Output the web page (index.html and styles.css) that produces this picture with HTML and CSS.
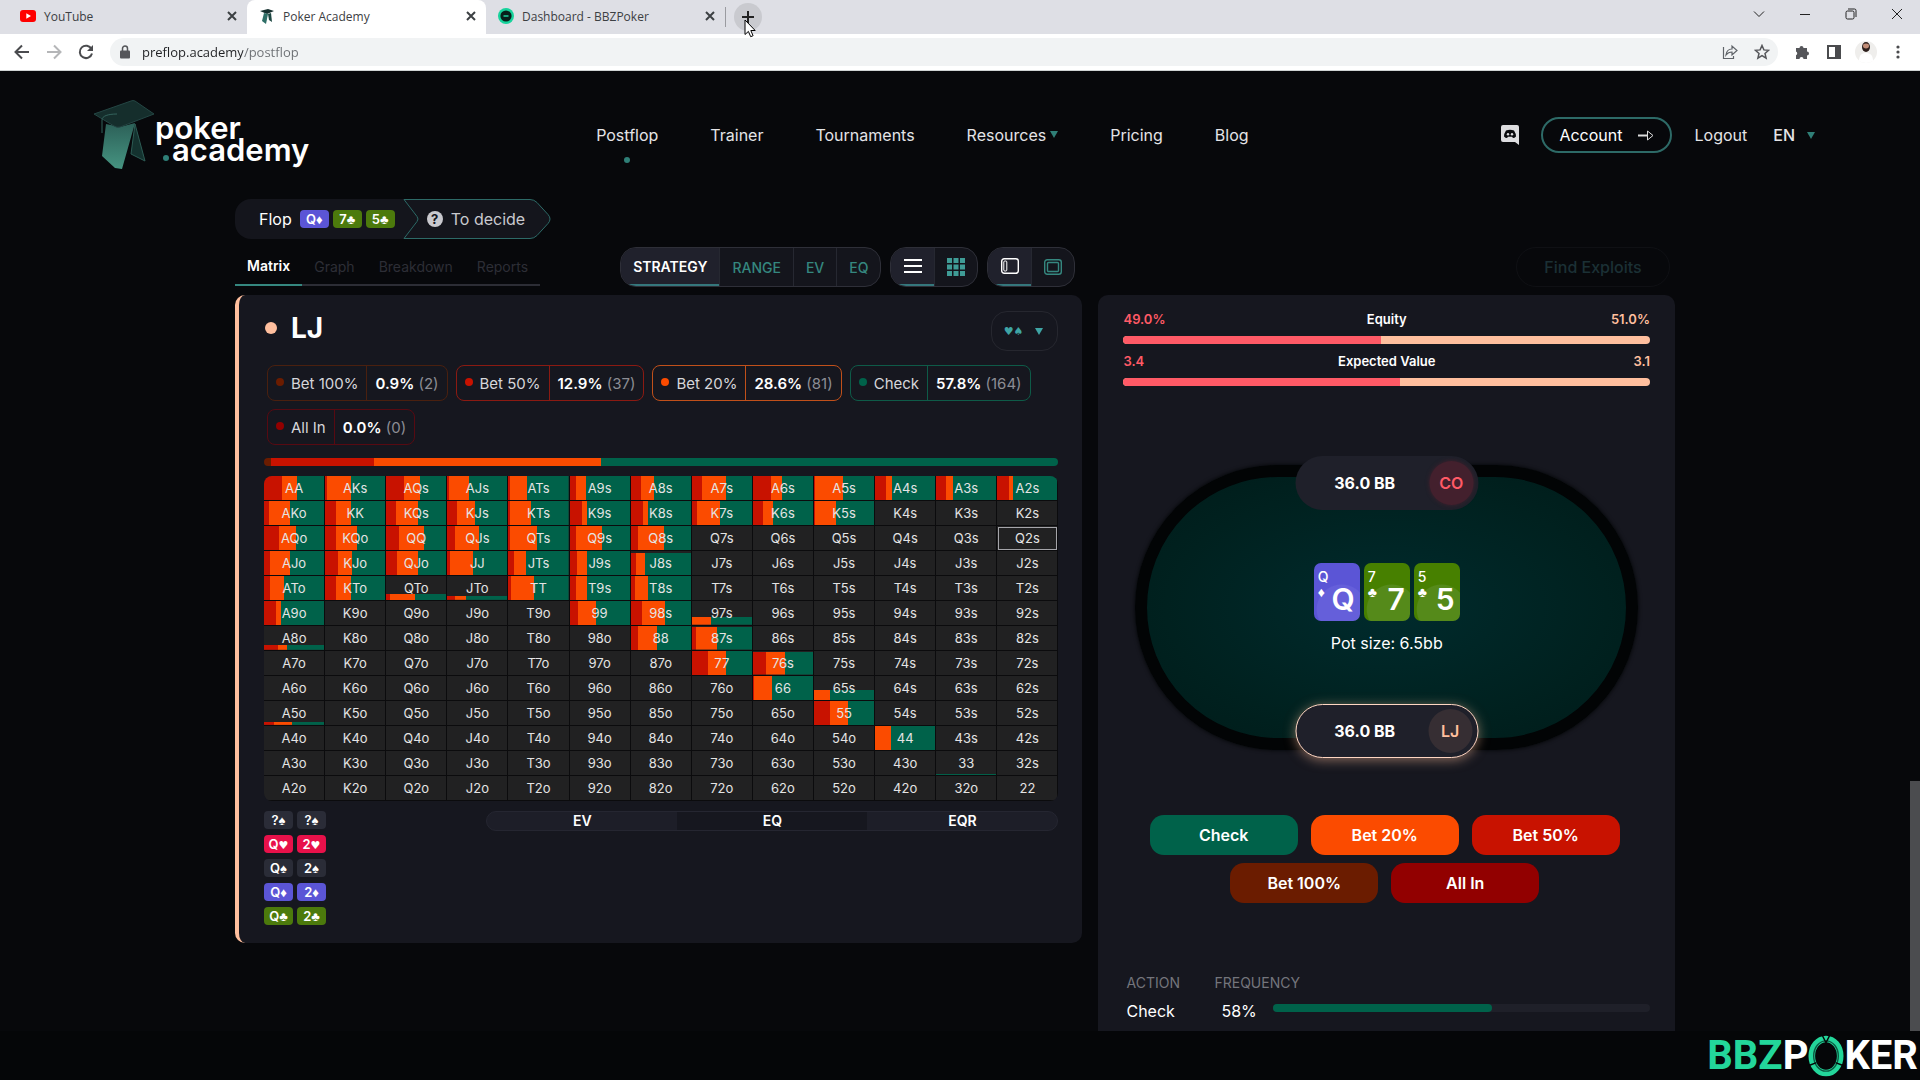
FILE: index.html
```html
<!DOCTYPE html>
<html lang="en">
<head>
    <meta charset="UTF-8">
    <meta name="viewport" content="width=device-width, initial-scale=1.0">
    <title>Poker Academy</title>
    <link rel="stylesheet" href="styles.css">
</head>
<body>
    <div class="browser">
        <div class="tab-strip">
            <div class="tab">
                <svg class="favicon" viewBox="0 0 16 16"><rect y="2" width="16" height="12" rx="3" fill="#f00"/><path d="M6.3 5.2v5.6L11 8z" fill="#fff"/></svg>
                <span class="tab-title">YouTube</span>
                <button class="tab-close" aria-label="Close"><svg viewBox="0 0 10 10"><path d="M1 1l8 8M9 1l-8 8"/></svg></button>
            </div>
            <div class="tab tab-active">
                <svg class="favicon" viewBox="0 0 16 16"><path d="M1 3l8-2 6 2-7 3z" fill="#16302f"/><path d="M5 5l4 1-2 10-4-3z" fill="#2f6f67"/><path d="M9 6l3-1 1 9-3-2z" fill="#1d4742"/></svg>
                <span class="tab-title">Poker Academy</span>
                <button class="tab-close" aria-label="Close"><svg viewBox="0 0 10 10"><path d="M1 1l8 8M9 1l-8 8"/></svg></button>
            </div>
            <div class="tab">
                <svg class="favicon" viewBox="0 0 16 16"><circle cx="8" cy="8" r="8" fill="#17d39c"/><circle cx="8" cy="8" r="5.6" fill="#07201b"/><path d="M5.5 8h5" stroke="#17a37c" stroke-width="2"/></svg>
                <span class="tab-title">Dashboard - BBZPoker</span>
                <button class="tab-close" aria-label="Close"><svg viewBox="0 0 10 10"><path d="M1 1l8 8M9 1l-8 8"/></svg></button>
            </div>
            <div class="new-tab-wrap">
                <button class="new-tab" aria-label="New tab"><svg viewBox="0 0 12 12"><path d="M6 0v12M0 6h12"/></svg></button>
                <svg class="cursor" viewBox="0 0 12 19"><path d="M1 1v14.5l3.4-3.1 2.3 5.3 2.4-1-2.3-5.2h4.4z" fill="#fff" stroke="#000"/></svg>
            </div>
            <div class="window-buttons">
                <button aria-label="Search tabs"><svg viewBox="0 0 12 12"><path d="M1 3.5l5 5 5-5"/></svg></button>
                <button aria-label="Minimize"><svg viewBox="0 0 12 12"><path d="M1 6.5h10"/></svg></button>
                <button aria-label="Restore"><svg viewBox="0 0 12 12"><rect x="1" y="3" width="8" height="8" rx="1.5"/><path d="M3 1h6.500a1.500 1.500 0 0 1 1.500 1.500V9"/></svg></button>
                <button aria-label="Close window"><svg viewBox="0 0 12 12"><path d="M1 1l10 10M11 1L1 11"/></svg></button>
            </div>
        </div>
        <div class="toolbar">
            <button class="tool" aria-label="Back"><svg viewBox="0 0 16 16"><path d="M15 8H2M8 1.500L1.500 8 8 14.500" fill="none" stroke="#4a4b4e" stroke-width="2"/></svg></button>
            <button class="tool" aria-label="Forward"><svg viewBox="0 0 16 16"><path d="M1 8h13M8 1.500L14.500 8 8 14.500" fill="none" stroke="#b5b6b8" stroke-width="2"/></svg></button>
            <button class="tool" aria-label="Reload"><svg viewBox="0 0 16 16"><path d="M13.500 5A6.200 6.200 0 1 0 14 9.500" fill="none" stroke="#4a4b4e" stroke-width="2"/><path d="M15 1v6H9z" fill="#4a4b4e"/></svg></button>
            <div class="omnibox">
                <svg class="lock" viewBox="0 0 10 14"><path d="M2.500 6V3.500a2.500 2.500 0 0 1 5 0V6" fill="none" stroke="#55565a" stroke-width="1.500"/><rect y="5.500" width="10" height="8" rx="1" fill="#55565a"/></svg>
                <input class="url" type="text" value="preflop.academy/postflop" aria-label="Address">
                <button class="tool" aria-label="Share"><svg viewBox="0 0 16 16"><path d="M1.500 3v11.500h10V12M4 11c.5-4 2.500-6 6-6V2l5 4.500-5 4.500V8C7.500 8 5.500 9 4 11z" fill="none" stroke="#5f6368" stroke-width="1.200"/></svg></button>
                <button class="tool" aria-label="Bookmark"><svg viewBox="0 0 16 16"><path d="M8 1.500l1.900 4.400 4.700.4-3.600 3.100 1.100 4.700L8 11.600l-4.100 2.500L5 9.400 1.400 6.300l4.700-.4z" fill="none" stroke="#55565a" stroke-width="1.500"/></svg></button>
            </div>
            <button class="tool" aria-label="Extensions"><svg viewBox="0 0 16 16"><path d="M2 4h3.500a2 2 0 1 1 4 0H13v3.500a2 2 0 1 1 0 4V15H9.500a2 2 0 0 0-4 0H2v-3.800a2 2 0 0 0 0-3.700z" fill="#55565a"/></svg></button>
            <button class="tool" aria-label="Side panel"><svg viewBox="0 0 16 16"><path d="M1 1h14v14H1zM3 3v10h6V3z" fill="#4a4b4e" fill-rule="evenodd"/></svg></button>
            <button class="tool" aria-label="Profile"><svg class="avatar" viewBox="0 0 22 22"><circle cx="11" cy="11" r="11" fill="#efeeec"/><path d="M4 20c0-6 3-8 7-8s7 2 7 8c-4 2.500-10 2.500-14 0z" fill="#fff"/><ellipse cx="11" cy="6" rx="4" ry="5" fill="#2c1e1b"/><ellipse cx="11" cy="5" rx="3" ry="2.400" fill="#c18c76"/></svg></button>
            <button class="tool" aria-label="Menu"><svg viewBox="0 0 16 16"><circle cx="8" cy="3" r="1.600"/><circle cx="8" cy="8" r="1.600"/><circle cx="8" cy="13" r="1.600"/></svg></button>
        </div>
    </div>

    <div class="viewport">
        <div class="page">
            <header class="header">
                <a class="logo" href="#">
                    <svg class="logo-hat" viewBox="0 0 62 70">
                        <defs><linearGradient id="gown" x1="0" y1="0" x2="0" y2="1"><stop offset="0" stop-color="#2c6058"/><stop offset="1" stop-color="#469481"/></linearGradient></defs>
                        <path d="M42 24l10 37-14-7z" fill="#14322f" stroke="#2c5b54"/>
                        <path d="M13 24l14 3 15-4-13 46-7-1-13-12z" fill="url(#gown)"/>
                        <path d="M1 14L38 1q2-1 4 0l19 13-34 13q-3 1-6-1z" fill="#152e2c" stroke="#244644"/>
                        <path d="M24 14c-9 0-15 2-15 6v13" fill="none" stroke="#33635c"/>
                    </svg>
                    <span class="logo-text"><span>poker</span><span class="logo-second"><i></i>academy</span></span>
                </a>
                <nav class="nav">
                    <a class="nav-current" href="#">Postflop</a>
                    <a href="#">Trainer</a>
                    <a href="#">Tournaments</a>
                    <a href="#">Resources<svg class="caret" viewBox="0 0 8 7"><path d="M0 0h8L4 7z"/></svg></a>
                    <a href="#">Pricing</a>
                    <a href="#">Blog</a>
                </nav>
                <div class="user">
                    <a class="discord" href="#" aria-label="Discord"><svg viewBox="0 0 18 20"><path d="M2 0h14a2 2 0 0 1 2 2v18l-4-3H2a2 2 0 0 1-2-2V2a2 2 0 0 1 2-2z" fill="#dddde0"/><path d="M5 5.500q4-1.500 8 0 2 3 2 6-1.500 1.500-3 1.500l-1-1.300H7L6 13q-1.500 0-3-1.500 0-3 2-6z" fill="#090a0d"/><circle cx="7" cy="9.300" r="1.200" fill="#dddde0"/><circle cx="11" cy="9.300" r="1.200" fill="#dddde0"/></svg></a>
                    <a class="account" href="#">Account<svg viewBox="0 0 16 11"><path d="M0 4.500h9v2H0z" fill="#ddd"/><path d="M9.500 1l5.500 4.500-5.500 4.500z" fill="none" stroke="#ddd"/></svg></a>
                    <a href="#">Logout</a>
                    <a class="lang" href="#">EN<svg class="caret" viewBox="0 0 8 7"><path d="M0 0h8L4 7z"/></svg></a>
                </div>
            </header>

            <main class="content">
                <div class="path">
                    <div class="path-flop">Flop
                        <span class="mini diamond">Q♦</span>
                        <span class="mini club">7♣</span>
                        <span class="mini club">5♣</span>
                    </div>
                    <div class="path-decide">
                        <svg class="path-shape" viewBox="0 0 148 40"><path d="M1 .5h126q4 0 7 3l11 12q4 4.500 0 9l-11 12q-3 3-7 3H1l13-17q2-2.500 0-5z"/></svg>
                        <span class="question">?</span>To decide
                    </div>
                </div>

                <div class="columns">
                    <div class="controls">
                        <div class="views">
                            <button class="view-on">Matrix</button>
                            <button>Graph</button>
                            <button>Breakdown</button>
                            <button>Reports</button>
                        </div>
                        <div class="switches">
                            <div class="switch">
                                <button class="on">STRATEGY</button>
                                <button>RANGE</button>
                                <button>EV</button>
                                <button>EQ</button>
                            </div>
                            <div class="switch switch-icons">
                                <button class="on" aria-label="List"><svg viewBox="0 0 18 18"><path d="M0 3h18M0 9h18M0 15h18" stroke="#fff" stroke-width="2"/></svg></button>
                                <button aria-label="Grid"><svg viewBox="0 0 18 18"><path d="M0 0h5v5H0zM6.500 0h5v5h-5zM13 0h5v5h-5zM0 6.500h5v5H0zM6.500 6.500h5v5h-5zM13 6.500h5v5h-5zM0 13h5v5H0zM6.500 13h5v5h-5zM13 13h5v5h-5z" fill="#3f9c96"/></svg></button>
                            </div>
                            <div class="switch switch-icons">
                                <button class="on" aria-label="Side layout"><svg viewBox="0 0 18 18" fill="none" stroke="#fff"><rect x=".7" y="1.700" width="16.600" height="14.600" rx="2.500" stroke-width="1.400"/><rect x="2.800" y="4" width="3" height="10" rx="1"/></svg></button>
                                <button aria-label="Full layout"><svg viewBox="0 0 18 18" fill="none" stroke="#35877f"><rect x=".7" y="1.700" width="16.600" height="14.600" rx="2.500" stroke-width="1.400"/><rect x="3.500" y="4.500" width="11" height="9" rx="1" stroke-width="1.400"/></svg></button>
                            </div>
                        </div>
                    </div>
                    <div class="exploits-row"><button class="exploits" disabled>Find Exploits</button></div>

                    <section class="panel matrix-panel">
                        <div class="panel-head">
                            <h1><i class="seat-dot"></i>LJ</h1>
                            <button class="suits" aria-label="Suits">♥♠<svg class="caret" viewBox="0 0 8 7"><path d="M0 0h8L4 7z"/></svg></button>
                        </div>
                        <div class="chips">
                            <button class="chip bet100"><span><i></i>Bet 100%</span><span><b>0.9%</b> (2)</span></button>
                            <button class="chip bet50"><span><i></i>Bet 50%</span><span><b>12.9%</b> (37)</span></button>
                            <button class="chip bet20"><span><i></i>Bet 20%</span><span><b>28.6%</b> (81)</span></button>
                            <button class="chip check"><span><i></i>Check</span><span><b>57.8%</b> (164)</span></button>
                            <button class="chip allin"><span><i></i>All In</span><span><b>0.0%</b> (0)</span></button>
                        </div>
                        <div class="total">
                            <div class="bg-bet100" style="width: 0.9%"></div>
                            <div class="bg-bet50" style="width: 12.9%"></div>
                            <div class="bg-bet20" style="width: 28.6%"></div>
                            <div class="bg-check" style="width: 57.6%"></div>
                        </div>
                        <div class="matrix-wrap"><table class="matrix" id="matrix" aria-label="Strategy matrix"></table></div>
                        <div class="details">
                            <div class="combos">
                                <span class="mini spade">?♠</span><span class="mini spade">?♠</span>
                                <span class="mini heart">Q<small>♥</small></span><span class="mini heart">2<small>♥</small></span>
                                <span class="mini spade">Q♠</span><span class="mini spade">2♠</span>
                                <span class="mini diamond">Q♦</span><span class="mini diamond">2♦</span>
                                <span class="mini club">Q♣</span><span class="mini club">2♣</span>
                            </div>
                            <div class="stats"><span>EV</span><span>EQ</span><span>EQR</span></div>
                        </div>
                    </section>

                    <section class="panel table-panel">
                        <div class="compare"><span class="co">49.0%</span><span>Equity</span><span class="lj">51.0%</span></div>
                        <div class="compare-bar"><div style="width: 49%"></div></div>
                        <div class="compare"><span class="co">3.4</span><span>Expected Value</span><span class="lj">3.1</span></div>
                        <div class="compare-bar"><div style="width: 52.5%"></div></div>

                        <div class="felt">
                            <div class="player player-top"><span class="stack">36.0 BB</span><span class="position co">CO</span></div>
                            <div class="board">
                                <div class="card card-diamond"><span class="corner">Q<small>♦</small></span><span class="rank">Q</span></div>
                                <div class="card"><span class="corner">7<small>♣</small></span><span class="rank">7</span></div>
                                <div class="card"><span class="corner">5<small>♣</small></span><span class="rank">5</span></div>
                            </div>
                            <div class="pot">Pot size: 6.5bb</div>
                            <div class="player player-bottom"><span class="stack">36.0 BB</span><span class="position lj">LJ</span></div>
                        </div>

                        <div class="actions">
                            <button class="bg-check">Check</button>
                            <button class="bg-bet20">Bet 20%</button>
                            <button class="bg-bet50">Bet 50%</button>
                            <button class="bg-bet100">Bet 100%</button>
                            <button class="bg-allin">All In</button>
                        </div>

                        <table class="frequency">
                            <tr><th class="col-action">ACTION</th><th colspan="2">FREQUENCY</th></tr>
                            <tr><td>Check</td><td class="percent">58%</td><td class="col-track"><div class="track"><div style="width: 58%"></div></div></td></tr>
                        </table>
                    </section>
                </div>
            </main>
        </div>
        <div class="scrollbar"><div class="thumb"></div></div>
    </div>

    <footer class="sponsor">
        <span class="sponsor-green">BBZ</span><span>P</span>
        <svg viewBox="0 0 38 44"><ellipse cx="19" cy="22" rx="15" ry="18" fill="none" stroke="#23d69a" stroke-width="7"/><ellipse cx="19" cy="22" rx="13" ry="16" fill="none" stroke="#0c5a42" stroke-width="1.500"/><path d="M15 0l4 8 4-8M1 32l8-3M37 32l-8-3" stroke="#050608" stroke-width="1.500" fill="none"/></svg>
        <span>KER</span>
    </footer>

    <script src="script.js"></script>
</body>
</html>
```
FILE: styles.css
```css
* {
    box-sizing: border-box;
}
body {
    margin: 0;
    height: 100vh;
    display: flex;
    flex-direction: column;
    overflow: hidden;
    background: #050608;
    color: #fff;
    font-family: Inter, "Liberation Sans", sans-serif;
    font-size: 16px;
}
a {
    color: inherit;
    text-decoration: none;
}
button {
    border: none;
    background: none;
    padding: 0;
    color: inherit;
    font: inherit;
}

/* browser bars */
.browser {
    flex: none;
    background: #fff;
    color: #3c4043;
    font-family: "Open Sans", "Noto Sans", sans-serif;
    border-bottom: 1px solid #cfd3d3;
}
.tab-strip {
    display: flex;
    align-items: stretch;
    height: 34px;
    padding-left: 8px;
    background: #dedfe5;
}
.tab {
    width: 239px;
    display: flex;
    align-items: center;
    padding: 0 8px 2px 12px;
    font-size: 12px;
}
.tab-active {
    background: #fff;
    border-radius: 8px 8px 0 0;
}
.favicon {
    width: 16px;
    height: 16px;
    margin-right: 8px;
}
.tab-title {
    flex: 1;
}
.tab-close {
    width: 12px;
    height: 16px;
    display: flex;
    align-items: center;
}
.tab-close svg {
    width: 10px;
    height: 10px;
    stroke: #3c4043;
    stroke-width: 2;
}
.new-tab-wrap {
    position: relative;
    display: flex;
    align-items: center;
    padding: 0 0 0 8px;
    margin: 0 auto 0 0;
    border-left: 1px solid #9a9ba0;
    height: 20px;
    align-self: center;
}
.new-tab {
    width: 28px;
    height: 28px;
    display: flex;
    align-items: center;
    justify-content: center;
    border-radius: 50%;
    background: #c9cacf;
}
.new-tab svg {
    width: 12px;
    height: 12px;
    stroke: #222;
    stroke-width: 2;
}
.cursor {
    position: absolute;
    left: 18px;
    top: 12px;
    width: 12px;
    height: 19px;
}
.window-buttons {
    display: flex;
    padding-bottom: 6px;
}
.window-buttons button {
    width: 46px;
    display: flex;
    align-items: center;
    justify-content: center;
}
.window-buttons svg {
    width: 12px;
    height: 12px;
    fill: none;
    stroke: #222;
}
.toolbar {
    height: 36px;
    display: flex;
    align-items: center;
    padding: 0 6px;
}
.tool {
    width: 32px;
    height: 28px;
    display: flex;
    align-items: center;
    justify-content: center;
}
.tool svg {
    width: 16px;
    height: 16px;
    fill: #4a4b4e;
}
.tool .avatar {
    width: 22px;
    height: 22px;
}
.omnibox {
    flex: 1;
    display: flex;
    align-items: center;
    height: 28px;
    margin: 0 8px;
    padding-left: 10px;
    border-radius: 14px;
    background: #f1f3f4;
}
.lock {
    width: 10px;
    height: 14px;
}
.url {
    flex: 1;
    margin-left: 12px;
    padding: 0;
    border: none;
    font-family: inherit;
    font-size: 13px;
    color: transparent;
    background: linear-gradient(to right, #202124 101px, #6b6e72 101px);
    -webkit-background-clip: text;
    background-clip: text;
}

/* site */
.viewport {
    flex: 1;
    min-height: 0;
    display: flex;
    background: #07080b;
}
.page {
    flex: 1;
    overflow: hidden;
}
.scrollbar {
    width: 10px;
    display: flex;
    align-items: flex-end;
}
.thumb {
    width: 100%;
    height: 26%;
    background: #4b4c4f;
}
.caret {
    width: 8px;
    height: 7px;
    fill: #2f7f77;
}
.header {
    height: 128px;
    padding: 0 95px 0 93px;
    display: flex;
    align-items: center;
    justify-content: space-between;
    color: #e4e4e7;
}
.logo {
    display: flex;
    align-items: flex-end;
    color: #fff;
}
.logo-hat {
    width: 62px;
    height: 70px;
}
.logo-text {
    display: flex;
    flex-direction: column;
    margin-bottom: 9px;
    font-size: 31px;
    font-weight: 600;
    line-height: 22px;
}
.logo-second {
    margin-left: 8px;
}
.logo-second i {
    display: inline-block;
    width: 6px;
    height: 6px;
    margin-right: 3px;
    border-radius: 50%;
    background: #2f7f77;
}
.nav {
    display: flex;
    gap: 52px;
    margin-left: 34px;
}
.nav .caret {
    margin: 0 0 3px 4px;
}
.nav-current {
    position: relative;
}
.nav-current::after {
    content: "";
    position: absolute;
    left: 50%;
    bottom: -18px;
    width: 6px;
    height: 6px;
    margin-left: -3px;
    border-radius: 50%;
    background: #2f7f77;
}
.user {
    display: flex;
    align-items: center;
    gap: 22px;
}
.discord svg {
    display: block;
    width: 18px;
    height: 20px;
}
.account {
    display: flex;
    align-items: center;
    gap: 16px;
    height: 36px;
    padding: 0 16px;
    border: 2px solid #2d6a67;
    border-radius: 18px;
    color: #fff;
}
.account svg {
    width: 16px;
    height: 11px;
}
.lang {
    margin-left: 4px;
    font-weight: 500;
}
.lang .caret {
    margin: 0 0 2px 12px;
}
.content {
    max-width: 1440px;
    margin: 0 auto;
}

.path {
    display: flex;
    height: 40px;
    margin-bottom: 8px;
}
.path-flop {
    display: flex;
    align-items: center;
    gap: 4px;
    padding: 0 24px;
    background: #14151c;
    border-radius: 16px 0 0 16px;
    clip-path: polygon(0 0, 92% 0, 100% 50%, 92% 100%, 0 100%);
}
.path-flop .mini:first-child {
    margin-left: 4px;
}
.path-decide {
    position: relative;
    z-index: 0;
    width: 148px;
    margin-left: -16px;
    padding-left: 24px;
    display: flex;
    align-items: center;
    gap: 8px;
    color: #c9c9ce;
    font-size: 16px;
    white-space: nowrap;
}
.path-shape {
    position: absolute;
    inset: 0;
    z-index: -1;
    fill: #14151c;
    stroke: #2d6a67;
}
.question {
    width: 16px;
    height: 16px;
    border-radius: 50%;
    background: #c9c9ce;
    color: #14151c;
    font-size: 13px;
    font-weight: 700;
    line-height: 16px;
    text-align: center;
}
.mini {
    width: 29px;
    height: 18px;
    border-radius: 4px;
    color: #fff;
    font-size: 13px;
    font-weight: 600;
    line-height: 18px;
    text-align: center;
}
.mini small {
    font-family: "DejaVu Sans", sans-serif;
    font-size: 11px;
    line-height: 10px;
}
.diamond { background: #5b55d6; }
.club { background: #4c7a0c; }
.heart { background: #e8114a; }
.spade { background: #2a2c37; }

.columns {
    display: grid;
    grid-template-columns: minmax(0, 147fr) minmax(0, 100fr);
    gap: 8px 16px;
    align-items: start;
}
.controls {
    display: flex;
    justify-content: space-between;
    height: 40px;
    padding-right: 7px;
}
.views {
    display: flex;
    align-self: flex-start;
    height: 39px;
    font-size: 14px;
    border-bottom: 2px solid #2c2d35;
}
.views button {
    height: 39px;
    padding: 0 12px;
    color: #2d2e36;
}
.views .view-on {
    color: #fff;
    font-weight: 600;
    border-bottom: 2px solid #35877f;
}
.switches {
    display: flex;
    gap: 9px;
}
.switch {
    display: flex;
    overflow: hidden;
    border: 1px solid #2e2f38;
    border-radius: 16px;
    background: #14151c;
    color: #35877f;
    font-size: 14px;
    font-weight: 500;
}
.switch button {
    display: flex;
    align-items: center;
    padding: 0 12px;
    border-left: 1px solid #262831;
}
.switch .on {
    border-left: none;
    border-bottom: 2px solid #35777c;
    background: #20212c;
    color: #fff;
    font-weight: 600;
}
.switch-icons button,
.switch-icons .on {
    width: 43px;
    justify-content: center;
    padding: 0;
}
.switch svg {
    width: 18px;
    height: 18px;
}
.exploits-row {
    display: flex;
    justify-content: flex-end;
    padding-right: 5px;
}
.exploits {
    width: 154px;
    height: 40px;
    border: 1px solid #0f1014;
    border-radius: 20px;
    color: #1b3035;
    font-weight: 500;
}

.panel {
    background: #16171f;
    border-radius: 10px;
}
.matrix-panel {
    padding: 16px 24px 18px 25px;
    border-left: 4px solid #ffbf9e;
}
.panel-head {
    display: flex;
    align-items: center;
    justify-content: space-between;
    margin-bottom: 14px;
}
h1 {
    display: flex;
    align-items: center;
    gap: 14px;
    margin: 0 0 6px 1px;
    font-size: 28px;
    font-weight: 700;
    line-height: 34px;
}
.seat-dot {
    width: 12px;
    height: 12px;
    border-radius: 50%;
    background: #ffbf9e;
}
.suits {
    display: flex;
    align-items: center;
    gap: 12px;
    height: 40px;
    padding: 0 14px 0 12px;
    border: 1px solid #26272f;
    border-radius: 16px;
    color: #3fa5a5;
    font-family: "DejaVu Sans", sans-serif;
    font-size: 11px;
}
.suits .caret {
    fill: #3fa5a5;
}
.chips {
    display: flex;
    flex-wrap: wrap;
    gap: 8px;
    padding-left: 3px;
    margin-bottom: 13px;
}
.chip {
    display: flex;
    height: 36px;
    border: 1px solid;
    border-radius: 8px;
    font-size: 15px;
}
.chip span {
    display: flex;
    align-items: center;
    padding: 0 8px;
    color: #8c8d94;
    white-space: pre;
}
.chip span:first-child {
    color: #d6d6da;
    border-right: 1px solid;
    border-color: inherit;
}
.chip b {
    color: #fff;
    font-weight: 600;
}
.chip i {
    width: 8px;
    height: 8px;
    margin: 0 7px 2px 0;
    border-radius: 50%;
}
.bet100 { border-color: #4a200f; }
.bet50 { border-color: #8b1a12; }
.bet20 { border-color: #c1501a; }
.check { border-color: #0e5b48; }
.allin { border-color: #570a12; }
.bg-bet100, .bet100 i { background: #6b1c00; }
.bg-bet50, .bet50 i { background: #c81200; }
.bg-bet20, .bet20 i { background: #fb4b00; }
.bg-check, .check i { background: #00624a; }
.bg-allin, .allin i { background: #920000; }

.total {
    display: flex;
    height: 8px;
    margin-bottom: 10px;
    border-radius: 4px;
    overflow: hidden;
}
.matrix-wrap {
    overflow: hidden;
    border-radius: 8px;
    margin-bottom: 10px;
}
.matrix {
    width: 100%;
    table-layout: fixed;
    border-spacing: 0;
    font-size: 13px;
    color: #e4e4e4;
}
.matrix td {
    height: 25px;
    padding: 0;
    border-right: 1px solid #0b0b0d;
    border-bottom: 1px solid #0b0b0d;
    background-color: #212122;
    background-repeat: no-repeat;
    background-position: bottom;
    line-height: 24px;
    text-align: center;
}
.matrix .picked {
    outline: 1px solid #a5a5aa;
    outline-offset: -2px;
}
.details {
    display: flex;
    justify-content: space-between;
    align-items: flex-start;
}
.combos {
    display: grid;
    grid-template-columns: 29px 29px;
    gap: 6px 4px;
}
.stats {
    display: flex;
    width: 72%;
    height: 20px;
    overflow: hidden;
    border: 1px solid #252631;
    border-radius: 10px;
    background: #1d1e28;
    font-size: 14px;
    font-weight: 600;
    line-height: 18px;
    text-align: center;
}
.stats span {
    flex: 1;
}
.stats span:nth-child(2) {
    background: #16171f;
}

.table-panel {
    padding: 15px 25px 60px;
}
.compare {
    display: grid;
    grid-template-columns: 1fr auto 1fr;
    margin-bottom: 8px;
    font-size: 13px;
    font-weight: 600;
    line-height: 18px;
}
.co { color: #ff5a66; }
.lj { color: #ffbf9e; }
.compare .lj {
    text-align: right;
}
.compare-bar {
    height: 8px;
    margin-bottom: 8px;
    overflow: hidden;
    border-radius: 4px;
    background: #ffbf9e;
}
.compare-bar div {
    height: 100%;
    background: #ff5a66;
}
.felt {
    position: relative;
    display: flex;
    flex-direction: column;
    align-items: center;
    justify-content: center;
    gap: 12px;
    height: 285px;
    margin: 79px 12px 65px;
    border: 12px solid #020405;
    border-radius: 143px;
    background: radial-gradient(#002b2d, #00211f 65%, #001b19);
    box-shadow: 0 0 4px #020405;
}
.player {
    position: absolute;
    left: 50%;
    display: flex;
    align-items: center;
    width: 183px;
    height: 54px;
    padding: 0 5px;
    border-radius: 27px;
    background: #1f202a;
    font-weight: 700;
    transform: translateX(-50%);
}
.player-top {
    top: -21px;
}
.player-bottom {
    bottom: -20px;
    border: 1px solid #ffd6c2;
    box-shadow: 0 2px 12px rgba(255, 191, 158, 0.5);
}
.stack {
    flex: 1;
    text-align: center;
}
.position {
    width: 44px;
    height: 44px;
    border-radius: 50%;
    background: #362e33;
    font-weight: 600;
    line-height: 44px;
    text-align: center;
}
.player-top .position {
    background: #43202d;
    box-shadow: 0 0 4px #43202d;
}
.board {
    display: flex;
    gap: 4px;
}
.card {
    width: 46px;
    height: 58px;
    display: flex;
    justify-content: space-between;
    padding: 5px 5px 6px 4px;
    border-radius: 7px;
    background: radial-gradient(circle at 60% 80%, #558a1a 45%, #478000 47%);
}
.card-diamond {
    background: radial-gradient(circle at 60% 80%, #655fda 45%, #5b55d6 47%);
}
.corner {
    display: flex;
    flex-direction: column;
    font-size: 14px;
    font-weight: 500;
    line-height: 18px;
}
.corner small {
    font-size: 14px;
    line-height: 12px;
}
.rank {
    align-self: flex-end;
    font-size: 30px;
    font-weight: 600;
    line-height: 32px;
}
.pot {
    line-height: 20px;
}
.actions {
    display: flex;
    flex-wrap: wrap;
    justify-content: center;
    gap: 8px 13px;
    padding-right: 4px;
    margin-bottom: 70px;
}
.actions button {
    width: 148px;
    height: 40px;
    border-radius: 14px;
    font-weight: 600;
}
.frequency {
    width: 100%;
    border-spacing: 0;
}
.frequency th {
    padding: 0 3px;
    color: #74757c;
    font-size: 14px;
    font-weight: 400;
    line-height: 20px;
    text-align: left;
}
.frequency td {
    height: 36px;
    padding: 0 3px;
}
.frequency .col-action {
    width: 88px;
}
.frequency .percent {
    width: 59px;
    padding-left: 10px;
}
.frequency .col-track {
    padding-right: 0;
}
.track {
    height: 8px;
    margin-bottom: 6px;
    border-radius: 4px;
    background: #1f2029;
}
.track div {
    height: 100%;
    border-radius: 4px;
    background: #00624a;
}

.sponsor {
    flex: none;
    height: 49px;
    display: flex;
    align-items: center;
    justify-content: flex-end;
    padding-right: 2px;
    font-family: Roboto, "Liberation Sans", sans-serif;
    font-size: 40px;
    font-weight: 700;
    line-height: 49px;
}
.sponsor-green {
    color: #23d69a;
}
.sponsor svg {
    width: 36px;
    height: 42px;
}
```
FILE: script.js
```js
const ranks = 'AKQJT98765432';

// hand: [bet 50% ends at, bet 20% ends at, share of the range (optional)], the rest is check
const hands = {
    AA: [30, 55], AKs: [4, 44], AQs: [30, 57], AJs: [4, 37], ATs: [4, 32], A9s: [10, 27], A8s: [16, 39],
    A7s: [17, 56], A6s: [30, 49], A5s: [1, 49], A4s: [19, 29], A3s: [17, 28], A2s: [20, 27],
    AKo: [9, 44], KK: [19, 44], KQs: [16, 53], KJs: [17, 46], KTs: [4, 39], K9s: [20, 29], K8s: [20, 29],
    K7s: [9, 47], K6s: [17, 33], K5s: [1, 37],
    AQo: [25, 53], KQo: [19, 53], QQ: [22, 64], QJs: [14, 54], QTs: [4, 48], Q9s: [10, 54], Q8s: [12, 55],
    AJo: [10, 44], KJo: [22, 45], QJo: [19, 54], JJ: [5, 43], JTs: [11, 31], J9s: [12, 29], J8s: [8, 24, 92],
    ATo: [10, 34], KTo: [19, 43], QTo: [6, 48, 25], JTo: [14, 31, 16], TT: [5, 44], T9s: [10, 29], T8s: [7, 28],
    A9o: [20, 28], 99: [13, 44], '98s': [19, 57], '97s': [0, 31, 32],
    A8o: [23, 38, 20], 88: [12, 44], '87s': [7, 41, 94],
    77: [26, 57], '76s': [22, 54, 94], 66: [2, 31], '65s': [0, 26, 42],
    A5o: [16, 47, 12], 55: [27, 57], 44: [0, 26], 33: [0, 0, 4]
};

const matrix = document.querySelector('#matrix');

for (let i = 0; i < ranks.length; i++) {
    const row = matrix.insertRow();
    for (let j = 0; j < ranks.length; j++) {
        let name = ranks[i] + ranks[j];
        if (j > i) name += 's';
        if (j < i) name = ranks[j] + ranks[i] + 'o';

        const cell = row.insertCell();
        cell.textContent = name;
        if (name === 'Q2s') cell.className = 'picked';
        if (hands[name]) {
            const [red, orange, share = 100] = hands[name];
            cell.style.backgroundImage = `linear-gradient(to right, #c81200 ${red}%, #fb4b00 ${red}% ${orange}%, #00624a ${orange}%)`;
            cell.style.backgroundSize = `100% ${share}%`;
        }
    }
}
```
